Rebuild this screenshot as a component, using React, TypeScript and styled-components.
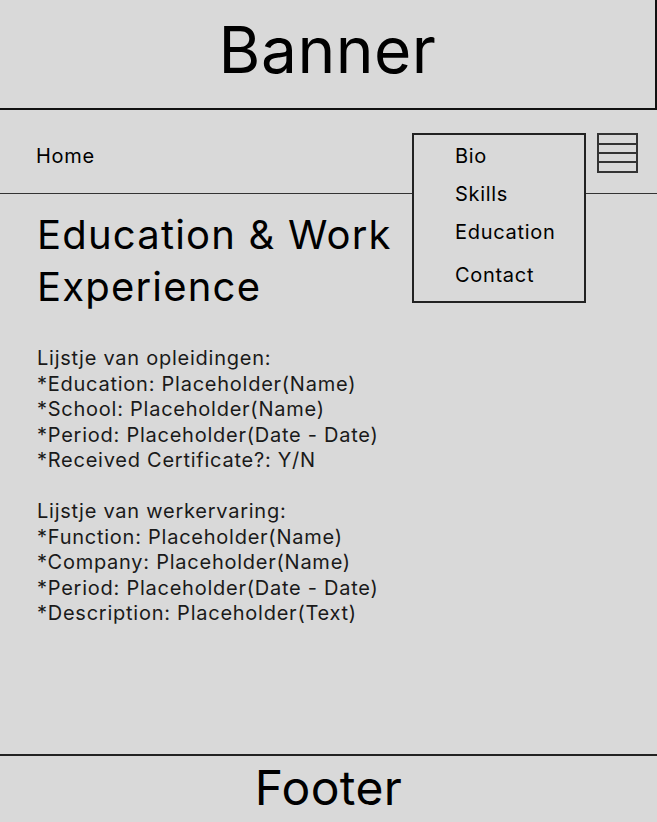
import React from "react";
import styled, { createGlobalStyle } from "styled-components";

const Global = createGlobalStyle`
  html, body { margin: 0; padding: 0; background: #d9d9d9; }
  body { font-family: Inter, "Noto Sans", sans-serif; color: #000; }
`;

const Page = styled.div`
  width: 657px;
  height: 822px;
  display: flex;
  flex-direction: column;
  overflow: hidden;
  background: #d9d9d9;
`;

const Banner = styled.header`
  box-sizing: border-box;
  width: 657px;
  height: 110px;
  border-right: 2px solid #111;
  border-bottom: 2px solid #111;
  display: flex;
  align-items: center;
  justify-content: center;
  font-size: 64px;
  font-weight: 400;
  letter-spacing: 0.5px;
  padding-bottom: 10px;
`;

const Nav = styled.nav`
  position: relative;
  box-sizing: border-box;
  height: 84px;
  border-bottom: 1px solid #333;
  display: flex;
  align-items: flex-start;
  justify-content: space-between;
  padding: 23px 19px 0 36px;
  letter-spacing: 0.7px;
`;

const NavLink = styled.span`
  font-size: 20px;
  line-height: 24px;
  margin-top: 11px;
`;

const Hamburger = styled.div`
  box-sizing: border-box;
  width: 41px;
  height: 40px;
  border: 2px solid #333;
  display: grid;
  grid-template-rows: 8fr 9fr 10fr 10fr;
  & > span + span { border-top: 2px solid #333; }
`;

const Dropdown = styled.div`
  position: absolute;
  left: 412px;
  top: 23px;
  box-sizing: border-box;
  width: 174px;
  height: 170px;
  border: 2px solid #222;
  background: #d9d9d9;
  padding: 9px 0 0 41px;
  display: flex;
  flex-direction: column;
  z-index: 2;
`;

const DropItem = styled.span<{ $gap: number }>`
  font-size: 20px;
  line-height: 24px;
  margin-top: ${(p) => p.$gap}px;
`;

const Main = styled.main`
  flex: 1;
  padding: 15px 36px 0 37px;
`;

const Heading = styled.h1`
  margin: 0;
  font-size: 40px;
  font-weight: 400;
  line-height: 52px;
  letter-spacing: 1.2px;
`;

const Body = styled.p`
  margin: 33px 0 0 0;
  font-size: 20px;
  line-height: 25.5px;
  letter-spacing: 0.75px;
  color: #1a1a1a;
  white-space: pre-line;
`;

const Footer = styled.footer`
  box-sizing: border-box;
  height: 68px;
  border-top: 2px solid #222;
  display: flex;
  justify-content: center;
  align-items: center;
  font-size: 48px;
  letter-spacing: 0.4px;
  padding-bottom: 4px;
`;

const text = `Lijstje van opleidingen:
*Education: Placeholder(Name)
*School: Placeholder(Name)
*Period: Placeholder(Date - Date)
*Received Certificate?: Y/N

Lijstje van werkervaring:
*Function: Placeholder(Name)
*Company: Placeholder(Name)
*Period: Placeholder(Date - Date)
*Description: Placeholder(Text)`;

export default function App() {
  return (
    <Page>
      <Global />
      <Banner>Banner</Banner>
      <Nav>
        <NavLink>Home</NavLink>
        <Dropdown>
          <DropItem $gap={0}>Bio</DropItem>
          <DropItem $gap={14}>Skills</DropItem>
          <DropItem $gap={14}>Education</DropItem>
          <DropItem $gap={19}>Contact</DropItem>
        </Dropdown>
        <Hamburger>
          <span />
          <span />
          <span />
          <span />
        </Hamburger>
      </Nav>
      <Main>
        <Heading>
          Education &amp; Work
          <br />
          Experience
        </Heading>
        <Body>{text}</Body>
      </Main>
      <Footer>Footer</Footer>
    </Page>
  );
}
